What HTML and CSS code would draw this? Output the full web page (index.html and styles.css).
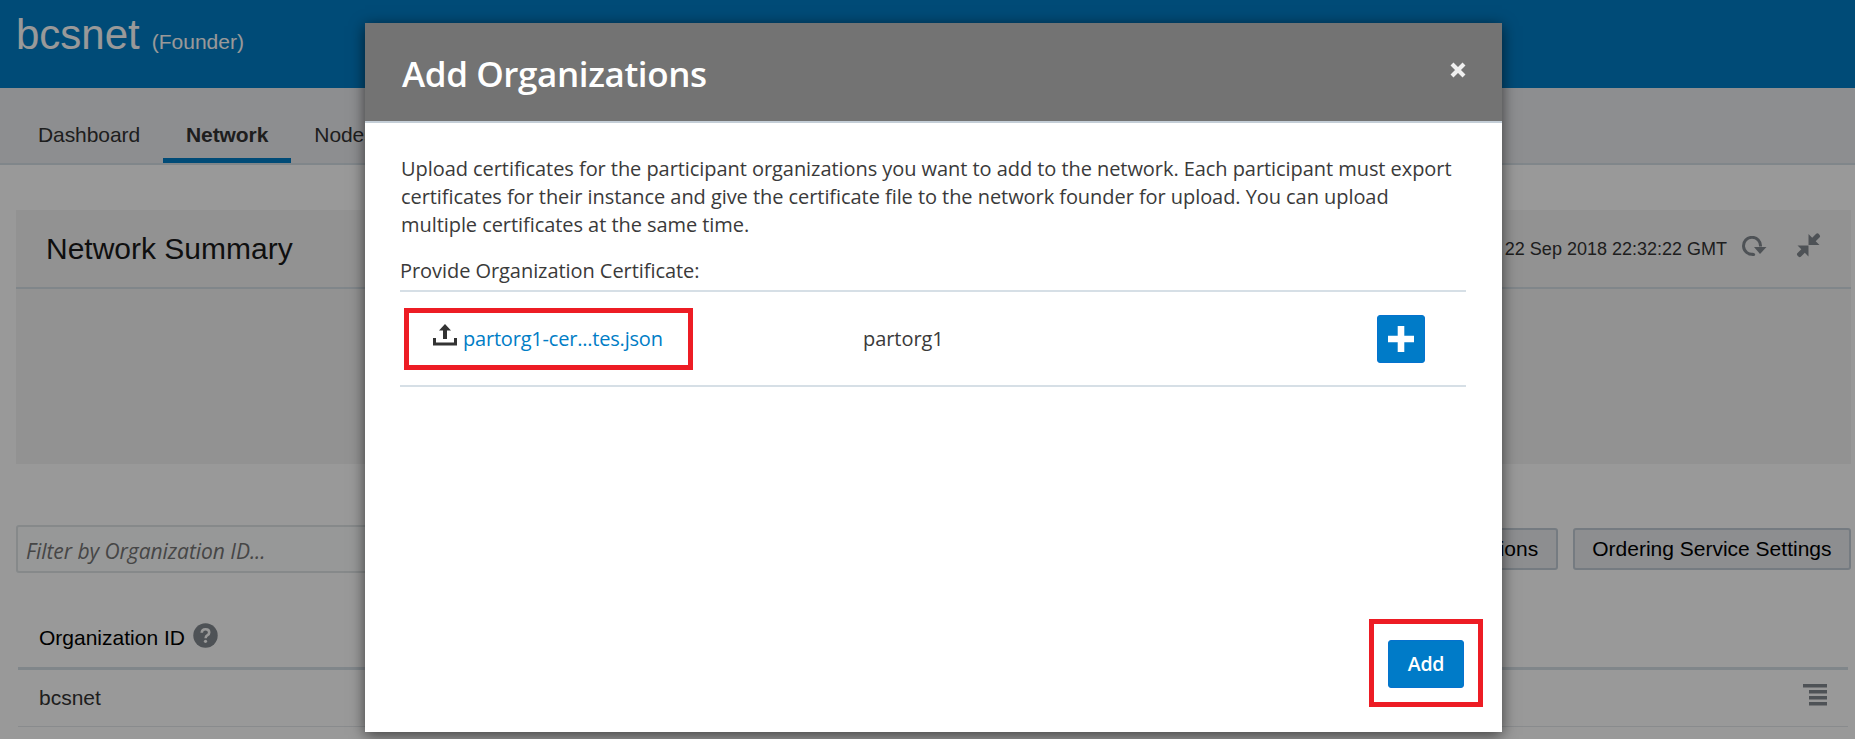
FILE: index.html
```html
<!DOCTYPE html>
<html lang="en">
<head>
<meta charset="utf-8">
<title>bcsnet</title>
<link rel="stylesheet" href="styles.css">
</head>
<body>
<div class="page">
  <header class="brand"><h1 class="brand-name">bcsnet</h1><span class="brand-role">(Founder)</span></header>
  <nav class="tabs">
    <a class="tab">Dashboard</a>
    <a class="tab active">Network</a>
    <a class="tab">Nodes</a>
  </nav>
  <main class="content">
    <section class="summary">
      <div class="summary-head">
        <h2 class="summary-title">Network Summary</h2>
        <span class="stamp">22 Sep 2018 22:32:22 GMT</span>
        <svg class="refresh" width="26" height="22" viewBox="0 0 26 22"><path d="M11.5 18.2A8.500 8.500 0 1 1 18.500 10.500" fill="none" stroke="#83898f" stroke-width="3"/><path d="M11 18.400h.6" stroke="#83898f" stroke-width="3" stroke-linecap="round"/><path d="M12 11h12.500l-6.500 7z" fill="#83898f"/></svg>
        <svg class="collapse" width="25" height="25" viewBox="0 0 25 25" fill="#83898f"><path d="M12.500 1l3.700 3.700 4-4q1.500-1 3 .7 1.500 1.500.5 2.900l-4 4 3.800 3.700h-11zM12.500 23.500l-3.700-3.700-4 4q-1.500 1-3-.7-1.500-1.500-.5-2.900l4-4-3.800-3.700h11z"/></svg>
      </div>
    </section>
    <div class="toolbar">
      <div class="filter">Filter by Organization ID...</div>
      <div class="actions">
        <button class="btn">Add Organizations</button>
        <button class="btn">Ordering Service Settings</button>
      </div>
    </div>
    <div class="table">
      <div class="table-head">Organization ID
        <svg class="help" width="25" height="25" viewBox="0 0 25 25"><circle cx="12.500" cy="12.500" r="12.200" fill="#83898f"/><path d="M8.700 9.800q.2-3.500 3.800-3.500 3.700 0 3.700 3.100 0 1.700-1.700 2.800-1.800 1.100-1.900 3" fill="none" stroke="#fff" stroke-width="2.600"/><circle cx="12.500" cy="18.300" r="1.600" fill="#fff"/></svg>
      </div>
      <div class="table-row">bcsnet
        <svg class="menu" width="24" height="22" viewBox="0 0 24 22" fill="#83898f"><path d="M0 0h24v3.500H0zM6 6h18v3.500H6zM6 12h18v3.500H6zM6 18h18v3.500H6z"/></svg>
      </div>
    </div>
  </main>
</div>
<div class="backdrop">
  <div class="dialog">
    <div class="dialog-head">
      <h2 class="dialog-title">Add Organizations</h2>
      <svg class="close" width="16" height="16" viewBox="0 0 16 16"><path d="M2 2l12 12M14 2L2 14" stroke="#f0f0f0" stroke-width="4.200"/></svg>
    </div>
    <div class="dialog-body">
      <p class="intro">Upload certificates for the participant organizations you want to add to the network. Each participant must export<br>certificates for their instance and give the certificate file to the network founder for upload. You can upload<br>multiple certificates at the same time.</p>
      <div class="label">Provide Organization Certificate:</div>
      <div class="cert-row">
        <div class="cert-file">
          <svg class="upload" width="24" height="22" viewBox="0 0 24 22" fill="#333"><path d="M0 14h3v4.500h18V14h3v7.500H0zM12 0l6 6.500h-4V15h-4V6.500H6z"/></svg>
          <a class="file-link">partorg1-cer...tes.json</a>
        </div>
        <div class="cert-org">partorg1</div>
        <button class="plus"><svg width="26" height="26" viewBox="0 0 26 26"><path d="M9.700 0h6.600v9.700H26v6.600h-9.700V26H9.700v-9.700H0V9.700h9.700z" fill="#fff"/></svg></button>
      </div>
    </div>
    <div class="dialog-foot"><div class="marked"><button class="add">Add</button></div></div>
  </div>
</div>
</body>
</html>
```
FILE: styles.css
```css
* { box-sizing: border-box; }
body { margin: 0; width: 1855px; height: 739px; overflow: hidden; background: #fff; color: #333; font: 21px/24px "Liberation Sans", Arial, sans-serif; }
h1, h2, p { margin: 0; font-weight: 400; }
button { margin: 0; font: inherit; }
svg { flex: none; display: block; }
.page { height: 739px; overflow: hidden; }

.brand { height: 88px; background: #007dc6; color: #fff; display: flex; align-items: baseline; padding: 11px 0 0 16px; }
.brand-name { font-size: 42px; line-height: 48px; }
.brand-role { margin-left: 12px; }

.tabs { height: 77px; background: #ebedf0; border-bottom: 2px solid #d6dfe6; display: flex; align-items: flex-end; padding-left: 15px; letter-spacing: -.08px; }
.tab { height: 42px; padding: 2px 23px 0; line-height: 24px; border-bottom: 5px solid transparent; }
.tab.active { font-weight: 700; border-color: #007dc6; }

.content { padding: 45px 4px 0 16px; }
.summary { height: 254px; background: #f4f4f4; }
.summary-head { height: 79px; border-bottom: 2px solid #d6dfe6; display: flex; align-items: center; padding: 0 30px 0 30px; }
.summary-title { flex: 1; font-size: 30px; line-height: 36px; color: #1a1a1a; }
.stamp { font-size: 18px; }
.refresh { margin: -4px 0 0 15px; }
.collapse { margin: -6px 0 0 28px; }

.toolbar { margin-top: 61px; display: flex; justify-content: space-between; align-items: flex-start; }
.filter { width: 700px; height: 48px; border: 2px solid #dfe4e7; border-radius: 3px; background: #fcfdfe; padding: 10px 8px; font: italic 21px/28px "Open Sans", sans-serif; letter-spacing: -.05px; color: #757575; }
.actions { display: flex; gap: 15px; padding-top: 3px; }
.btn { height: 42px; padding: 0 17.5px; border: 2px solid #c4ced7; border-radius: 3px; background: #ebedf0; color: #000; }

.table { margin: 38px 3px 0 2px; }
.table-head { height: 59px; border-bottom: 3px solid #d6dfe6; padding: 15px 0 0 21px; color: #000; display: flex; gap: 8px; }
.help { margin-top: -3px; }
.table-row { height: 57px; border-bottom: 1px solid #e4e8eb; padding: 16px 21px 0; display: flex; justify-content: space-between; }
.menu { margin-top: -2px; }

.backdrop { position: absolute; inset: 0; background: rgba(0,0,0,.4); padding: 23px 0 0 365px; overflow: hidden; }
.dialog { width: 1137px; height: 709px; background: #fff; box-shadow: 0 3px 14px rgba(0,0,0,.6); display: flex; flex-direction: column; font-family: "Open Sans", sans-serif; color: #3a3a3a; }
.dialog-head { height: 100px; flex: none; background: #737373; border-bottom: 2px solid #c4ced7; display: flex; justify-content: space-between; padding: 26px 36px 0 37px; }
.dialog-title { font-size: 35px; line-height: 50px; font-weight: 600; color: #fff; letter-spacing: -.4px; }
.close { margin-top: 13px; }
.dialog-body { flex: 1; padding: 32px 36px 0 35px; font-size: 20px; line-height: 28px; letter-spacing: -.06px; }
.intro { margin-left: 1px; white-space: nowrap; }
.label { margin: 18px 0 5px; }
.cert-row { height: 97px; border: solid #d6dfe6; border-width: 2px 0; display: flex; align-items: center; }
.cert-file { flex: none; width: 289px; height: 62px; margin: 1px 170px 0 4px; padding-left: 24px; border: 5px solid #ed1c24; display: flex; gap: 6px; }
.upload { margin-top: 11px; }
.file-link { color: #007dc6; line-height: 52px; letter-spacing: -.2px; }
.cert-org { flex: 1; line-height: 50px; }
.plus { width: 48px; height: 48px; margin-right: 41px; padding: 0; border: 1px solid #0572ce; border-radius: 3px; background: #007bc8; display: grid; place-items: center; }
.dialog-foot { display: flex; justify-content: flex-end; padding: 0 19px 25px 0; }
.marked { width: 114px; height: 88px; border: 5px solid #ed1c24; padding: 16px 14px; }
.add { width: 76px; height: 48px; border: 1px solid #0572ce; border-radius: 3px; background: #007bc8; color: #fff; font-weight: 600; font-size: 19.5px; padding: 0; letter-spacing: -.2px; }
```
